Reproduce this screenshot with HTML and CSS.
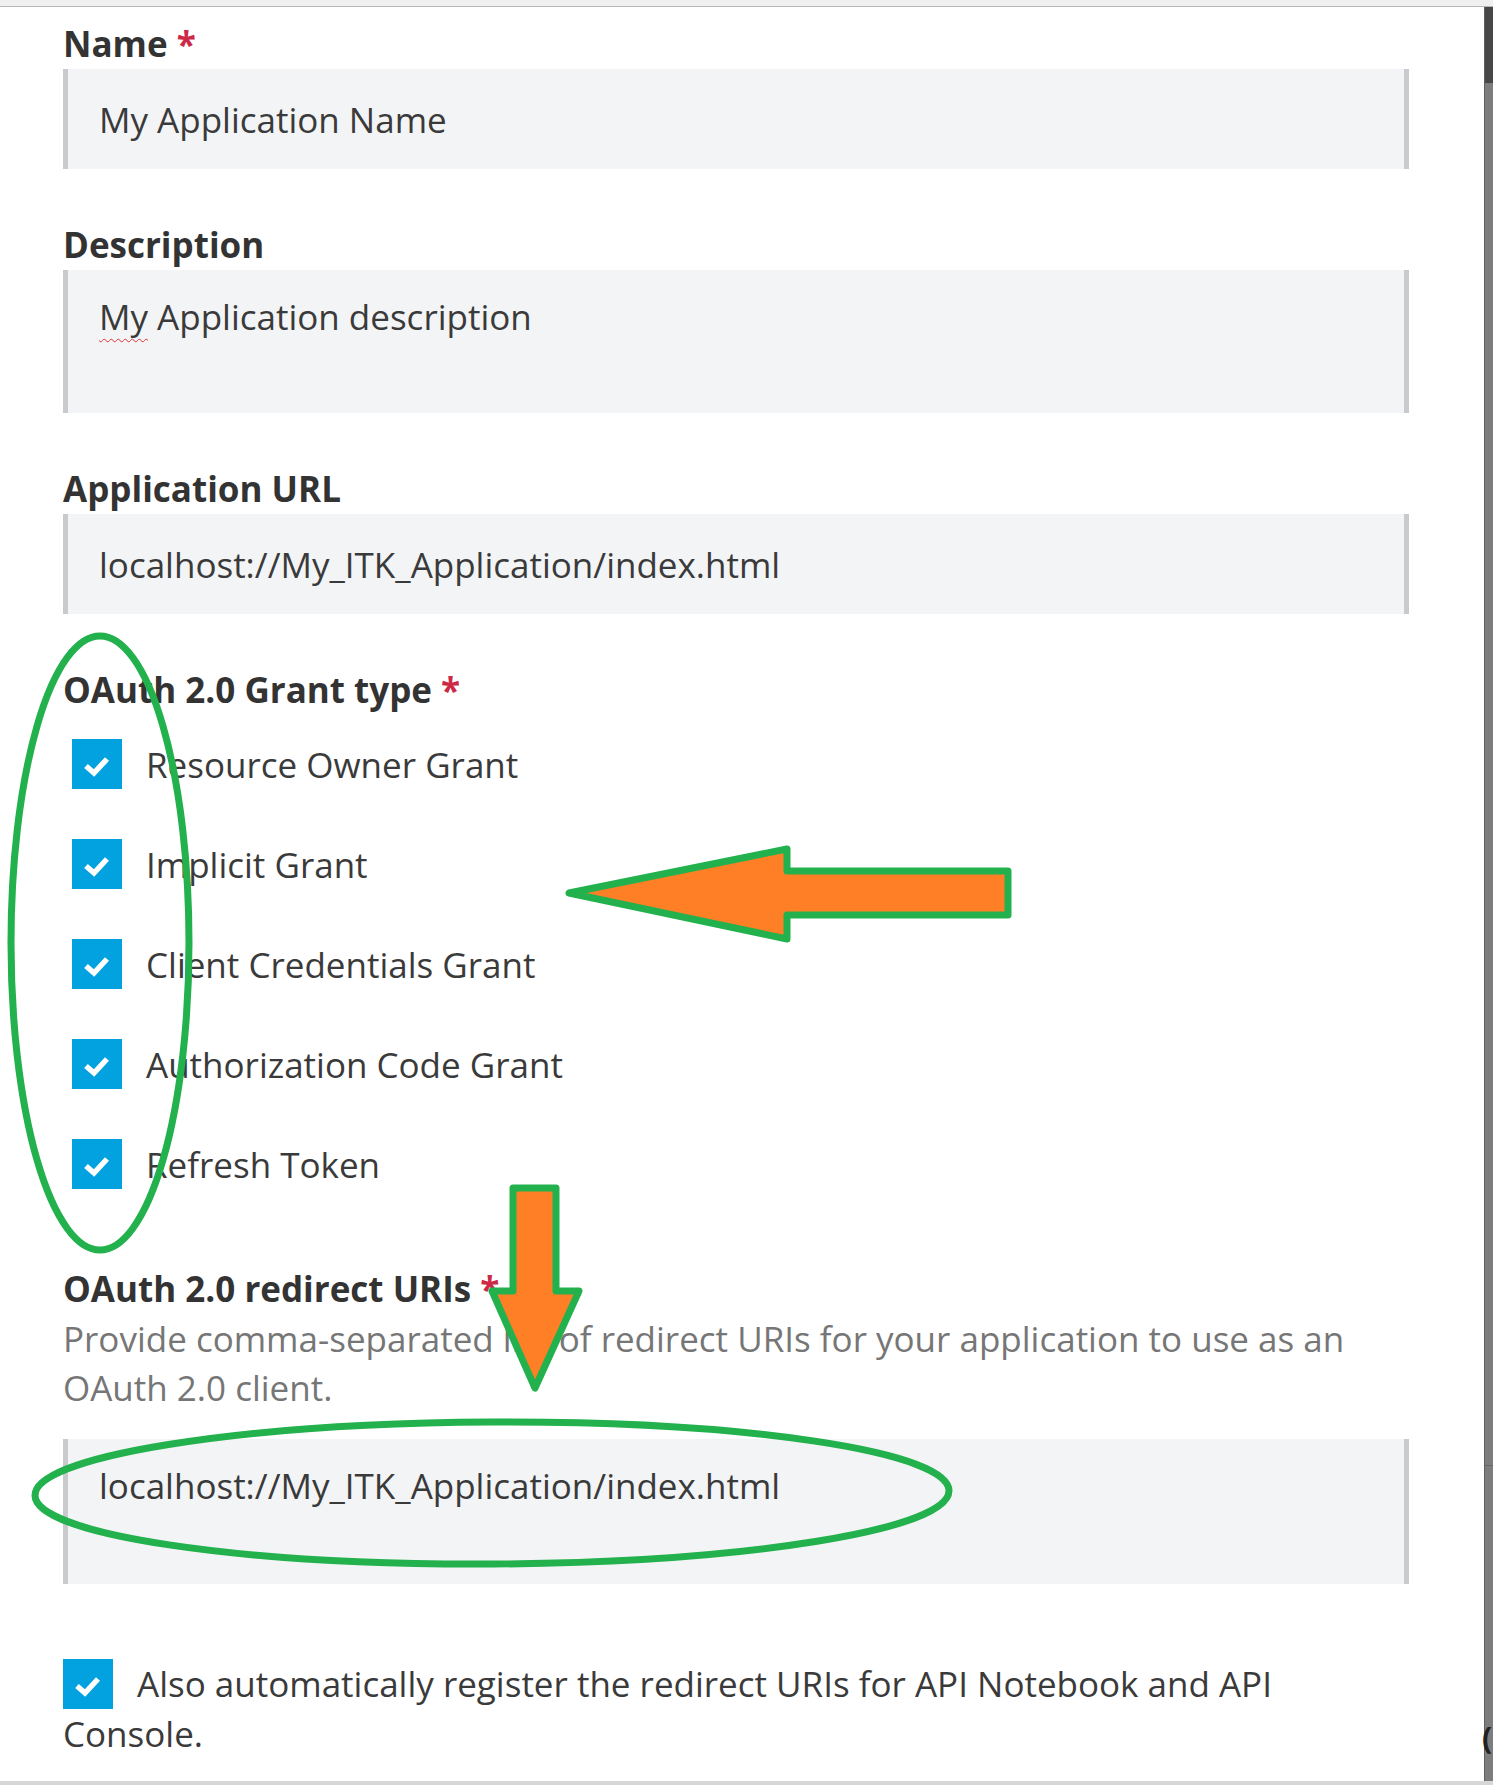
FILE: index.html
```html
<!DOCTYPE html>
<html lang="en">
<head>
<meta charset="utf-8">
<title>Application form</title>
<link rel="stylesheet" href="styles.css">
</head>
<body>
<div class="topbar"></div>
<div class="window">
  <main class="form">
    <div class="field">
      <div class="label">Name <span class="req">*</span></div>
      <div class="input">My Application Name</div>
    </div>
    <div class="field">
      <div class="label">Description</div>
      <div class="input area"><span class="spell">My</span> Application description</div>
    </div>
    <div class="field">
      <div class="label">Application URL</div>
      <div class="input">localhost://My_ITK_Application/index.html</div>
    </div>
    <div class="field">
      <div class="label">OAuth 2.0 Grant type <span class="req">*</span></div>
      <ul class="checks">
        <li class="check"><span class="box"><svg viewBox="0 0 50 50" width="50" height="50"><path d="M14 27 L22 34 L35 20" /></svg></span>Resource Owner Grant</li>
        <li class="check"><span class="box"><svg viewBox="0 0 50 50" width="50" height="50"><path d="M14 27 L22 34 L35 20" /></svg></span>Implicit Grant</li>
        <li class="check"><span class="box"><svg viewBox="0 0 50 50" width="50" height="50"><path d="M14 27 L22 34 L35 20" /></svg></span>Client Credentials Grant</li>
        <li class="check"><span class="box"><svg viewBox="0 0 50 50" width="50" height="50"><path d="M14 27 L22 34 L35 20" /></svg></span>Authorization Code Grant</li>
        <li class="check"><span class="box"><svg viewBox="0 0 50 50" width="50" height="50"><path d="M14 27 L22 34 L35 20" /></svg></span>Refresh Token</li>
      </ul>
    </div>
    <div class="field">
      <div class="label">OAuth 2.0 redirect URIs <span class="req">*</span></div>
      <p class="help">Provide comma-separated list of redirect URIs for your application to use as an OAuth 2.0 client.</p>
      <div class="input area tall">localhost://My_ITK_Application/index.html</div>
    </div>
    <p class="also"><span class="box"><svg viewBox="0 0 50 50" width="50" height="50"><path d="M14 27 L22 34 L35 20" /></svg></span>Also automatically register the redirect URIs for API Notebook and API Console.</p>
  </main>
  <div class="scrollbar">
    <div class="thumb"></div>
    <div class="track"></div>
    <div class="track lower"></div>
  </div>
</div>
<div class="bottombar"></div>
<span class="edge-glyph">(</span>
<svg class="marks" width="1493" height="1785" viewBox="0 0 1493 1785">
  <ellipse cx="100" cy="943" rx="89" ry="307" />
  <ellipse cx="492" cy="1493" rx="457" ry="71" transform="rotate(-0.3 492 1493)" />
  <polygon class="arrow" points="569,893 787,849 787,871 1008,871 1008,915 787,915 787,939" />
  <polygon class="arrow" points="513,1188 556,1188 556,1291 579,1291 535,1388 492,1291 513,1291" />
</svg>
</body>
</html>
```

FILE: styles.css
```css
* { box-sizing: border-box; }

html, body {
  margin: 0;
  padding: 0;
  background: #ffffff;
}

body {
  width: 1493px;
  height: 1785px;
  overflow: hidden;
  position: relative;
  font-family: "Open Sans", "Noto Sans", sans-serif;
  color: #383838;
}

.topbar {
  height: 7px;
  background: #f0f0f0;
  border-bottom: 1px solid #b7b7b7;
}

.window {
  display: flex;
  height: 1774px;
}

.form {
  flex: 1;
  padding: 17px 75px 0 63px;
  overflow: hidden;
}

.field + .field {
  margin-top: 56px;
}

.label {
  font-size: 35px;
  font-weight: 700;
  line-height: 40px;
  color: #333333;
  margin-bottom: 5px;
  white-space: nowrap;
}

.req {
  color: #cd2846;
}

.input {
  height: 100px;
  background: #f3f4f6;
  border-left: 5px solid #c9cacd;
  border-right: 5px solid #c9cacd;
  padding: 31px 0 0 31px;
  font-size: 35px;
  line-height: 40px;
  color: #3a3a3a;
  white-space: nowrap;
}

.input.area {
  height: 143px;
  padding-top: 27px;
}

.input.tall {
  height: 145px;
}

.spell {
  text-decoration: underline wavy #e0303a;
  text-decoration-thickness: 1px;
  text-underline-offset: 8px;
}

.checks {
  list-style: none;
  margin: 29px 0 0;
  padding: 0 0 24px 9px;
  display: flex;
  flex-direction: column;
  gap: 50px;
}

.check {
  display: flex;
  align-items: center;
  height: 50px;
  font-size: 35px;
  color: #3a3a3a;
  white-space: nowrap;
}

.box {
  flex: none;
  display: inline-block;
  width: 50px;
  height: 50px;
  background: #02a1df;
  margin-right: 24px;
}

.box svg {
  display: block;
}

.box path {
  fill: none;
  stroke: #ffffff;
  stroke-width: 5.5;
  stroke-linejoin: miter;
}

.help {
  margin: 0 0 27px;
  font-size: 35px;
  line-height: 49px;
  color: #767676;
}

.also {
  margin: 75px 60px 0 0;
  font-size: 35px;
  line-height: 50px;
  color: #3a3a3a;
}

.also .box {
  vertical-align: top;
  margin-right: 24px;
}

.scrollbar {
  width: 9px;
  display: flex;
  flex-direction: column;
  border-left: 1px solid #5f5f5f;
  background: #7d7d7d;
}

.thumb {
  height: 76px;
  background: #474747;
}

.track {
  height: 1382px;
  background: #7d7d7d;
}

.track.lower {
  flex: 1;
  height: auto;
  border-top: 1px solid #666666;
}

.bottombar {
  height: 4px;
  background: #d7d7d7;
}

.edge-glyph {
  position: absolute;
  left: 1482px;
  top: 1718px;
  font-size: 30px;
  font-weight: 700;
  color: #222222;
  line-height: 40px;
}

.marks {
  position: absolute;
  left: 0;
  top: 0;
  pointer-events: none;
}

.marks ellipse {
  fill: none;
  stroke: #22b14c;
  stroke-width: 7;
}

.marks .arrow {
  fill: #ff7f27;
  stroke: #22b14c;
  stroke-width: 7;
  stroke-linejoin: round;
}
```
